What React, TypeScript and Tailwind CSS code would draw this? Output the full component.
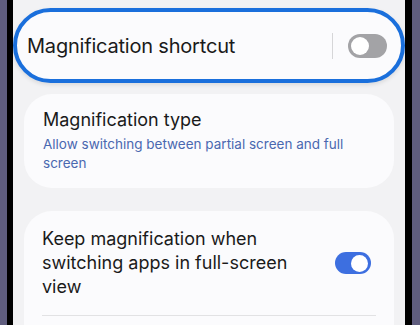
import React from "react";

function Toggle({ on }: { on: boolean }) {
  return on ? (
    <div className="w-[36px] h-[22px] rounded-full bg-[#3d6fe0] flex items-center justify-end px-[3px]">
      <div className="w-[17px] h-[17px] rounded-full bg-white" />
    </div>
  ) : (
    <div className="w-[39px] h-[24px] rounded-full bg-[#a3a3a6] flex items-center px-[3px]">
      <div className="w-[18px] h-[18px] rounded-full bg-white" />
    </div>
  );
}

export default function App() {
  return (
    <div
      className="w-[420px] h-[325px] flex overflow-hidden bg-[#f2f2f4]"
      style={{ fontFamily: "Inter, 'Noto Sans', sans-serif" }}
    >
      <div className="w-[7px] bg-[#5f5d7e] shrink-0" />
      <div className="w-[6px] bg-black shrink-0" />
      <div className="flex-1 flex flex-col pt-[8px] min-w-0">
        <div className="h-[75px] rounded-full border-[4px] border-[#1a6fdc] bg-[#fbfbfd] flex items-center pl-[10px] pr-[14px] shadow-[0_2px_4px_rgba(0,0,0,0.1)]">
          <span className="text-[20px] text-[#1a1a1a] tracking-[-0.2px]">Magnification shortcut</span>
          <div className="ml-auto w-[1px] h-[26px] bg-[#d6d6d8] mr-[15px]" />
          <Toggle on={false} />
        </div>
        <div className="mx-[11px] mt-[11px] h-[94px] rounded-[28px] bg-[#fbfbfd] px-[19px] pt-[14px]">
          <div className="text-[18px] leading-[24px] text-[#1a1a1a]">Magnification type</div>
          <div className="text-[13.5px] leading-[19px] text-[#4a68b0] mt-[3px] pr-[20px]">
            Allow switching between partial screen and full screen
          </div>
        </div>
        <div className="mx-[11px] mt-[23px] flex-1 rounded-t-[28px] bg-[#fbfbfd] px-[18px] pt-[16px]">
          <div className="flex items-center">
            <div className="text-[18px] leading-[24px] text-[#1a1a1a] w-[255px]">
              Keep magnification when switching apps in full-screen view
            </div>
            <div className="ml-auto mr-[5px]">
              <Toggle on={true} />
            </div>
          </div>
          <div className="h-[1px] bg-[#e2e2e4] mt-[16px]" />
        </div>
      </div>
      <div className="w-[7px] bg-black shrink-0" />
      <div className="w-[8px] bg-[#5f5d7e] shrink-0" />
    </div>
  );
}
